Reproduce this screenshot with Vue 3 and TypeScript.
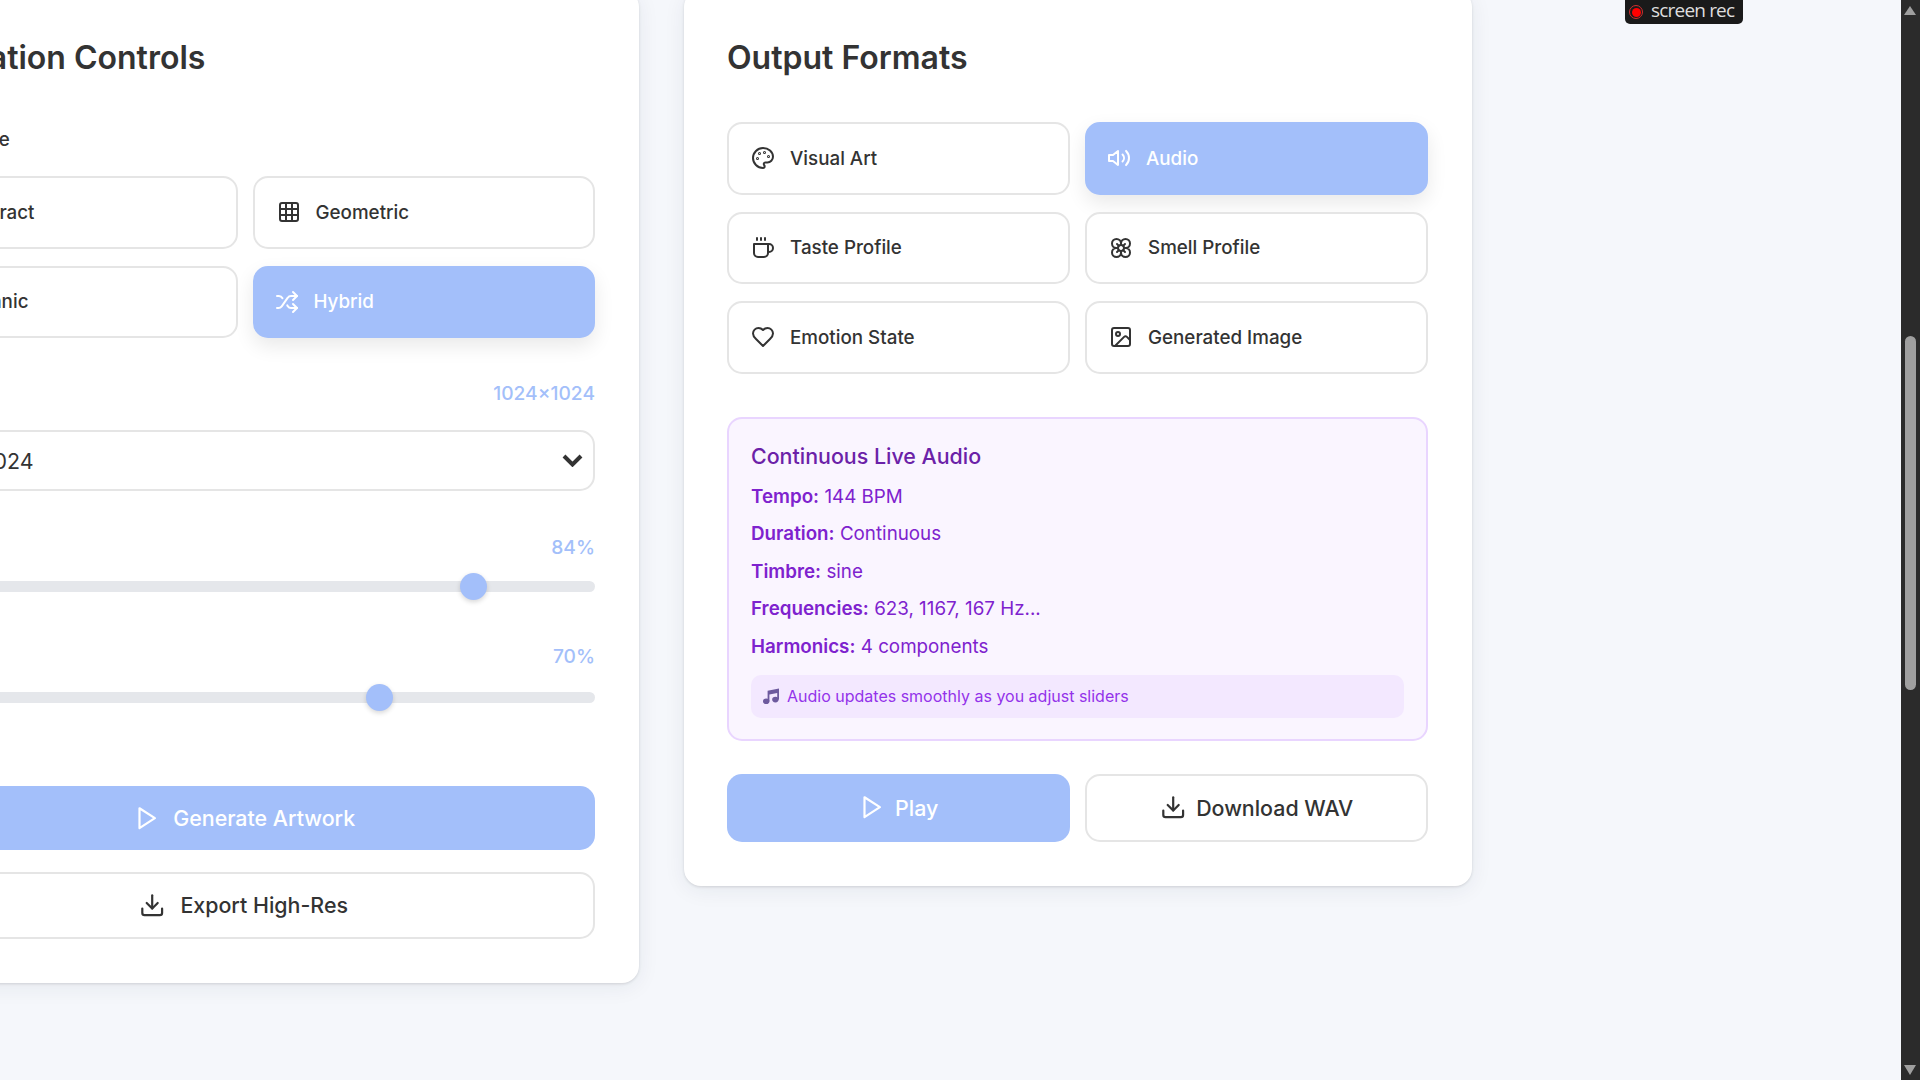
<script setup lang="ts">
import {ref} from "vue";

const styles = [
  {name: "Abstract", icon: "sparkle"},
  {name: "Geometric", icon: "grid"},
  {name: "Organic", icon: "leaf"},
  {name: "Hybrid", icon: "shuffle"},
];
const formats = [
  {name: "Visual Art", icon: "palette"},
  {name: "Audio", icon: "volume"},
  {name: "Taste Profile", icon: "coffee"},
  {name: "Smell Profile", icon: "flower"},
  {name: "Emotion State", icon: "heart"},
  {name: "Generated Image", icon: "image"},
];
const audioRows = [
  {key: "Tempo:", value: "144 BPM"},
  {key: "Duration:", value: "Continuous"},
  {key: "Timbre:", value: "sine"},
  {key: "Frequencies:", value: "623, 1167, 167 Hz..."},
  {key: "Harmonics:", value: "4 components"},
];

const activeStyle = ref("Hybrid");
const activeFormat = ref("Audio");
const complexity = ref(84);
const saturation = ref(70);
</script>

<template>
  <div class="page">
    <section class="card">
      <h2 class="card-title">Generation Controls</h2>

      <div class="label">Artistic Style</div>
      <div class="option-grid">
        <button
            v-for="item in styles"
            :key="item.name"
            class="option"
            :class="{active: activeStyle === item.name}"
            @click="activeStyle = item.name"
        >
          <svg class="icon" viewBox="0 0 24 24">
            <template v-if="item.icon === 'sparkle'">
              <path d="M12 3l2 7 7 2-7 2-2 7-2-7-7-2 7-2z"/>
            </template>
            <template v-else-if="item.icon === 'grid'">
              <rect width="18" height="18" x="3" y="3" rx="2"/>
              <path d="M3 9h18"/>
              <path d="M3 15h18"/>
              <path d="M9 3v18"/>
              <path d="M15 3v18"/>
            </template>
            <template v-else-if="item.icon === 'leaf'">
              <path d="M11 20A7 7 0 0 1 9.8 6.1C15.5 5 17 4.48 19 2c1 2 2 4.18 2 8 0 5.5-4.78 10-10 10Z"/>
              <path d="M2 21c0-3 1.85-5.36 5.08-6"/>
            </template>
            <template v-else>
              <path d="M2 18h1.4c1.3 0 2.5-.6 3.3-1.7l6.1-8.6c.7-1.1 2-1.7 3.3-1.7H22"/>
              <path d="m18 2 4 4-4 4"/>
              <path d="M2 6h1.9c1.5 0 2.9.9 3.6 2.2"/>
              <path d="M22 18h-5.9c-1.3 0-2.6-.7-3.3-1.8l-.5-.8"/>
              <path d="m18 14 4 4-4 4"/>
            </template>
          </svg>
          <span>{{ item.name }}</span>
        </button>
      </div>

      <div class="label-row size-row">
        <span class="label-text">Resolution</span>
        <span class="value">1024×1024</span>
      </div>
      <div class="select">
        <span>1024×1024</span>
        <svg class="chevron" viewBox="0 0 21 13"><path d="M2 2l8.5 8.5L19 2"/></svg>
      </div>

      <div class="label-row first-slider">
        <span class="label-text">Complexity</span>
        <span class="value">{{ complexity }}%</span>
      </div>
      <input v-model.number="complexity" class="slider" type="range" min="0" max="100">

      <div class="label-row second-slider">
        <span class="label-text">Saturation</span>
        <span class="value">{{ saturation }}%</span>
      </div>
      <input v-model.number="saturation" class="slider" type="range" min="0" max="100">

      <button class="action primary generate">
        <svg class="icon action-icon" viewBox="0 0 24 24"><polygon points="5 3 19 12 5 21 5 3"/></svg>
        <span>Generate Artwork</span>
      </button>
      <button class="action outline export">
        <svg class="icon action-icon" viewBox="0 0 24 24">
          <path d="M21 15v4a2 2 0 0 1-2 2H5a2 2 0 0 1-2-2v-4"/>
          <polyline points="7 10 12 15 17 10"/>
          <line x1="12" x2="12" y1="15" y2="3"/>
        </svg>
        <span>Export High-Res</span>
      </button>
    </section>

    <section class="card right-card">
      <h2 class="card-title">Output Formats</h2>

      <div class="option-grid">
        <button
            v-for="item in formats"
            :key="item.name"
            class="option"
            :class="{active: activeFormat === item.name}"
            @click="activeFormat = item.name"
        >
          <svg class="icon" viewBox="0 0 24 24">
            <template v-if="item.icon === 'palette'">
              <circle cx="13.5" cy="6.5" r=".5"/>
              <circle cx="17.5" cy="10.5" r=".5"/>
              <circle cx="8.5" cy="7.5" r=".5"/>
              <circle cx="6.5" cy="12.5" r=".5"/>
              <path d="M12 2C6.5 2 2 6.5 2 12s4.5 10 10 10c.926 0 1.648-.746 1.648-1.688 0-.437-.18-.835-.437-1.125-.29-.289-.438-.652-.438-1.125a1.64 1.64 0 0 1 1.668-1.668h1.996c3.051 0 5.555-2.503 5.555-5.554C21.965 6.012 17.461 2 12 2z"/>
            </template>
            <template v-else-if="item.icon === 'volume'">
              <polygon points="11 5 6 9 2 9 2 15 6 15 11 19 11 5"/>
              <path d="M15.54 8.46a5 5 0 0 1 0 7.07"/>
              <path d="M19.07 4.93a10 10 0 0 1 0 14.14"/>
            </template>
            <template v-else-if="item.icon === 'coffee'">
              <path d="M17 8h1a4 4 0 1 1 0 8h-1"/>
              <path d="M3 8h14v9a4 4 0 0 1-4 4H7a4 4 0 0 1-4-4Z"/>
              <line x1="6" x2="6" y1="2" y2="4"/>
              <line x1="10" x2="10" y1="2" y2="4"/>
              <line x1="14" x2="14" y1="2" y2="4"/>
            </template>
            <template v-else-if="item.icon === 'flower'">
              <circle cx="12" cy="12" r="3"/>
              <path d="M12 16.5A4.5 4.5 0 1 1 7.5 12 4.5 4.5 0 1 1 12 7.5a4.5 4.5 0 1 1 4.5 4.5 4.5 4.5 0 1 1-4.5 4.5"/>
              <path d="M12 7.5V9"/>
              <path d="M7.5 12H9"/>
              <path d="M16.5 12H15"/>
              <path d="M12 16.5V15"/>
              <path d="m8 8 1.88 1.88"/>
              <path d="M14.12 9.88 16 8"/>
              <path d="m8 16 1.88-1.88"/>
              <path d="M14.12 14.12 16 16"/>
            </template>
            <template v-else-if="item.icon === 'heart'">
              <path d="M19 14c1.49-1.46 3-3.21 3-5.5A5.5 5.5 0 0 0 16.5 3c-1.76 0-3 .5-4.5 2-1.5-1.5-2.74-2-4.5-2A5.5 5.5 0 0 0 2 8.5c0 2.3 1.5 4.05 3 5.5l7 7Z"/>
            </template>
            <template v-else>
              <rect width="18" height="18" x="3" y="3" rx="2" ry="2"/>
              <circle cx="9" cy="9" r="2"/>
              <path d="m21 15-3.086-3.086a2 2 0 0 0-2.828 0L6 21"/>
            </template>
          </svg>
          <span>{{ item.name }}</span>
        </button>
      </div>

      <div class="audio-panel">
        <h3 class="audio-title">Continuous Live Audio</h3>
        <p v-for="row in audioRows" :key="row.key" class="audio-row">
          <strong>{{ row.key }}</strong> {{ row.value }}
        </p>
        <div class="audio-note">
          <svg class="note-icon" viewBox="0 0 16 16">
            <ellipse cx="3.2" cy="13.2" rx="3.2" ry="2.8"/>
            <ellipse cx="12.4" cy="11.6" rx="3.2" ry="2.8"/>
            <path d="M4.6 2.8L16 .4v11.2h-1.8V5L6.4 6.6v6.6H4.6z"/>
          </svg>
          <span>Audio updates smoothly as you adjust sliders</span>
        </div>
      </div>

      <div class="audio-actions">
        <button class="action primary play">
          <svg class="icon action-icon" viewBox="0 0 24 24"><polygon points="5 3 19 12 5 21 5 3"/></svg>
          <span>Play</span>
        </button>
        <button class="action outline">
          <svg class="icon action-icon" viewBox="0 0 24 24">
            <path d="M21 15v4a2 2 0 0 1-2 2H5a2 2 0 0 1-2-2v-4"/>
            <polyline points="7 10 12 15 17 10"/>
            <line x1="12" x2="12" y1="15" y2="3"/>
          </svg>
          <span>Download WAV</span>
        </button>
      </div>
    </section>

    <div class="rec-badge">
      <span class="rec-dot"></span>
      <span class="rec-text">screen<b>rec</b></span>
    </div>

    <div class="scrollbar">
      <span class="arrow up"></span>
      <span class="thumb"></span>
      <span class="arrow down"></span>
    </div>
  </div>
</template>

<style scoped>
.page {
  position: relative;
  box-sizing: border-box;
  width: 1920px;
  height: 1080px;
  overflow: hidden;
  display: flex;
  align-items: flex-start;
  gap: 45px;
  background: #f5f7fb;
  color: #333333;
  font-family: Inter, "Liberation Sans", sans-serif;
}

.card {
  flex: 0 0 787px;
  box-sizing: border-box;
  margin-top: -10px;
  padding: 52px 44px 44px 43px;
  background: #ffffff;
  border-radius: 17px;
  box-shadow: 0 4px 22px rgba(30, 40, 70, 0.07), 0 1px 3px rgba(0, 0, 0, 0.12);
}

.card:first-child {
  margin-left: -148px;
}

.right-card {
  flex-basis: 788px;
}

.card-title {
  margin: 0 0 48px;
  font-size: 32px;
  line-height: 32px;
  font-weight: 600;
  color: #333333;
}

.label {
  height: 21px;
  margin: 55px 0 26px;
  font-size: 18.8px;
  line-height: 21px;
  font-weight: 500;
}

.option-grid {
  display: grid;
  grid-template-columns: 1fr 1fr;
  gap: 17px 15px;
}

.option {
  display: flex;
  align-items: center;
  gap: 15px;
  box-sizing: border-box;
  height: 72.5px;
  padding: 0 22px;
  border: 2.2px solid #e5e5e5;
  border-radius: 15px;
  background: #ffffff;
  color: #333333;
  font-family: inherit;
  font-size: 18.8px;
  font-weight: 500;
  text-align: left;
}

.option.active {
  padding: 0 20px;
  border: 2.2px solid #a3bffa;
  background: #a3bffa;
  color: #ffffff;
  box-shadow: 0 8px 20px rgba(0, 0, 0, 0.09);
}

.icon {
  flex: none;
  width: 24px;
  height: 24px;
  fill: none;
  stroke: currentColor;
  stroke-width: 2;
  stroke-linecap: round;
  stroke-linejoin: round;
}

.label-row {
  display: flex;
  justify-content: space-between;
  align-items: center;
  height: 22px;
  font-size: 19.2px;
  font-weight: 500;
}

.size-row {
  margin-top: 44px;
  margin-bottom: 26px;
}

.first-slider {
  margin-top: 45px;
  margin-bottom: 23px;
}

.second-slider {
  margin-top: 53px;
  margin-bottom: 25px;
}

.value {
  color: #a3bffa;
}

.select {
  display: flex;
  justify-content: space-between;
  align-items: center;
  box-sizing: border-box;
  height: 61px;
  padding: 0 10px 0 25px;
  border: 2.2px solid #e5e5e5;
  border-radius: 15px;
  font-size: 21.4px;
}

.chevron {
  width: 21px;
  height: 13px;
  fill: none;
  stroke: #333333;
  stroke-width: 4;
}

.slider {
  display: block;
  width: 100%;
  height: 11px;
  margin: 0;
  appearance: none;
  -webkit-appearance: none;
  border-radius: 6px;
  background: #e5e7eb;
  outline: none;
}

.slider::-webkit-slider-thumb {
  -webkit-appearance: none;
  width: 27px;
  height: 27px;
  border-radius: 50%;
  background: #a3bffa;
  box-shadow: 0 2px 5px rgba(0, 0, 0, 0.16);
}

.action {
  display: flex;
  justify-content: center;
  align-items: center;
  gap: 10px;
  box-sizing: border-box;
  width: 100%;
  border-radius: 15px;
  font-family: inherit;
  font-size: 21.4px;
  font-weight: 500;
}

.action-icon {
  width: 26.4px;
  height: 26.4px;
}

.primary {
  border: none;
  background: #a3bffa;
  color: #ffffff;
}

.outline {
  border: 2.2px solid #e5e5e5;
  background: #ffffff;
  color: #333333;
}

.generate {
  height: 64px;
  margin-top: 83px;
  padding-right: 7px;
  gap: 13px;
}

.export {
  height: 67px;
  margin-top: 22px;
  padding-right: 9px;
  padding-bottom: 2px;
  gap: 15px;
}

.audio-panel {
  box-sizing: border-box;
  height: 324px;
  margin-top: 43px;
  padding: 24px 22px 0;
  border: 2.2px solid #e9d5ff;
  border-radius: 15px;
  background: #faf5ff;
  color: #7e22ce;
}

.audio-title {
  margin: 0 0 17px;
  height: 26px;
  font-size: 21.4px;
  line-height: 26px;
  font-weight: 500;
  color: #6b21a8;
}

.audio-row {
  margin: 0 0 16.5px;
  font-size: 18.8px;
  line-height: 21px;
}

.audio-row strong {
  font-weight: 600;
}

.audio-note {
  display: flex;
  align-items: center;
  gap: 8px;
  box-sizing: border-box;
  height: 43px;
  margin-top: 18px;
  padding: 0 12px;
  border-radius: 10px;
  background: #f3e8ff;
  color: #9333ea;
  font-size: 16px;
}

.note-icon {
  flex: none;
  width: 16px;
  height: 16px;
  fill: #6d5a9e;
}

.audio-actions {
  display: grid;
  grid-template-columns: 1fr 1fr;
  gap: 15px;
  margin-top: 33px;
}

.audio-actions .action {
  height: 68px;
}

.rec-badge {
  position: absolute;
  top: 0;
  left: 1625px;
  display: flex;
  align-items: flex-start;
  width: 118px;
  height: 24px;
  border-radius: 0 0 5px 5px;
  background: #1a1a1a;
}

.rec-dot {
  flex: none;
  box-sizing: border-box;
  width: 14px;
  height: 14px;
  margin: 5px 8px 0 4px;
  border: 1px solid #d03030;
  border-radius: 50%;
  background: #ff0000;
  background-clip: content-box;
  padding: 1.5px;
}

.rec-text {
  color: #dedede;
  font-family: "Open Sans", sans-serif;
  font-size: 19px;
  line-height: 20px;
  letter-spacing: -0.8px;
  font-weight: 400;
}

.rec-text b {
  margin-left: 4px;
  font-weight: 500;
}

.scrollbar {
  position: absolute;
  top: 0;
  right: 0;
  width: 19px;
  height: 1080px;
  background: #2b2b2b;
}

.thumb {
  position: absolute;
  top: 336px;
  left: 4px;
  width: 11px;
  height: 354px;
  border-radius: 6px;
  background: #9f9f9f;
}

.arrow {
  position: absolute;
  left: 3px;
  width: 0;
  height: 0;
  border-left: 6.5px solid transparent;
  border-right: 6.5px solid transparent;
}

.arrow.up {
  top: 6px;
  border-bottom: 9px solid #9f9f9f;
}

.arrow.down {
  bottom: 5px;
  border-top: 10px solid #9f9f9f;
}
</style>

<style>
html, body {
  margin: 0;
  overflow: hidden;
}
</style>
